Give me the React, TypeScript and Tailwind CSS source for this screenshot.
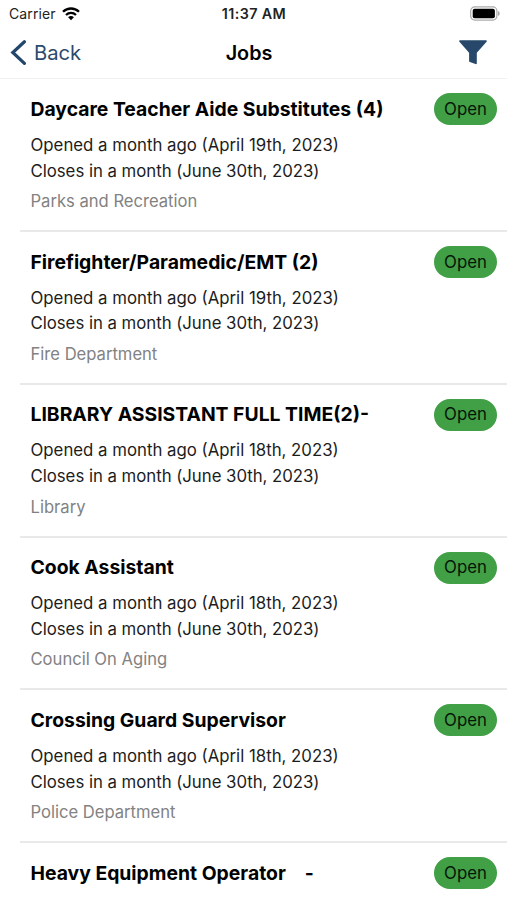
type Job = { title: string; suffix?: string; opened?: string; department?: string };

const jobs: Job[] = [
  { title: 'Daycare Teacher Aide Substitutes (4)', opened: '19th', department: 'Parks and Recreation' },
  { title: 'Firefighter/Paramedic/EMT (2)', opened: '19th', department: 'Fire Department' },
  { title: 'LIBRARY ASSISTANT FULL TIME(2)-', opened: '18th', department: 'Library' },
  { title: 'Cook Assistant', opened: '18th', department: 'Council On Aging' },
  { title: 'Crossing Guard Supervisor', opened: '18th', department: 'Police Department' },
  { title: 'Heavy Equipment Operator', suffix: '-' },
];

function StatusBar() {
  return (
    <div className="grid h-[27px] shrink-0 grid-cols-3 items-center pl-[9px] pr-[7px] text-[14px] leading-[18px]">
      <div className="flex items-center gap-[6px] text-[#222]">
        <span className="tracking-[0.1px]">Carrier</span>
        <svg width="18" height="14" viewBox="0 0 18 14" fill="none" stroke="#000" strokeWidth="2.3">
          <path d="M1 4.8C5.5.4 12.5.4 17 4.8M4 8c2.9-2.8 7.1-2.8 10 0" />
          <path d="M6.1 10.3c1.7-1.6 4.1-1.6 5.8 0L9 13.3z" fill="#000" stroke="none" />
        </svg>
      </div>
      <span className="mr-[1px] text-center text-[14.3px] font-semibold tracking-[0.4px] whitespace-nowrap text-[#222]">
        11:37 AM
      </span>
      <svg className="justify-self-end" width="30" height="15" viewBox="0 0 30 15">
        <rect x="0.7" y="0.9" width="26.2" height="13.2" rx="4" fill="#fff" stroke="#aaa" strokeWidth="1.2" />
        <rect x="2.7" y="2.8" width="22.2" height="9.4" rx="2" fill="#000" />
        <path d="M28 5.1c2.3.8 2.3 4 0 4.8z" fill="#aaa" />
      </svg>
    </div>
  );
}

function NavBar() {
  return (
    <div className="grid h-[52.4px] shrink-0 grid-cols-[1fr_auto_1fr] items-center border-b border-[#f1f1f1] pr-[20px] pl-[10px]">
      <div className="flex items-center gap-[8px] text-[#2c4a6c]">
        <svg width="16" height="26" viewBox="0 0 16 26" fill="none" stroke="#23466b" strokeWidth="3.2" strokeLinecap="round">
          <path d="M14.4 1.8 2.8 12.5 14.4 23.4" />
        </svg>
        <span className="text-[20.2px] leading-[26px]">Back</span>
      </div>
      <span className="pl-[1px] text-[19.8px] leading-[26px] font-semibold">Jobs</span>
      <svg className="mb-[1px] justify-self-end" width="28" height="25" viewBox="0 0 28 25" fill="#27486b">
        <path d="M1 .3h26q1 0 .8 1.3L17.8 12.8V23.4q-.2 1-1.3.7l-5.6-2q-.8-.3-.8-1.1v-8.2L.2 1.6Q0 .3 1 .3z" />
      </svg>
    </div>
  );
}

function JobRow({ job }: { job: Job }) {
  return (
    <li className="ml-[20px] flex h-[152.75px] shrink-0 items-start justify-between border-b-2 border-[#e9e9e9] pt-[14px] pr-[10px] pl-[10.5px]">
      <div className="whitespace-nowrap text-[16.8px] leading-[25.6px] text-[#1c1c1c]">
        <h2 className="pt-[2.4px] text-[19.35px] leading-[26px] font-bold text-black">
          {job.title}
          {job.suffix && <span className="ml-[19px]">{job.suffix}</span>}
        </h2>
        {job.opened && (
          <>
            <p className="mt-[11.2px]">Opened a month ago (April {job.opened}, 2023)</p>
            <p className="tracking-[-0.03px]">Closes in a month (June 30th, 2023)</p>
            <p className="mt-[5px] text-[16.6px] text-[#828282]">{job.department}</p>
          </>
        )}
      </div>
      <span className="flex h-[32px] w-[63px] shrink-0 items-center justify-center rounded-full bg-[#419f46] text-[16.8px] text-[#061506]">
        Open
      </span>
    </li>
  );
}

export default function App() {
  return (
    <div className="flex h-[900px] w-[507px] flex-col overflow-hidden bg-white font-['Inter',sans-serif] text-black">
      <StatusBar />
      <NavBar />
      <ul className="flex flex-col">
        {jobs.map((job) => (
          <JobRow key={job.title} job={job} />
        ))}
      </ul>
    </div>
  );
}
